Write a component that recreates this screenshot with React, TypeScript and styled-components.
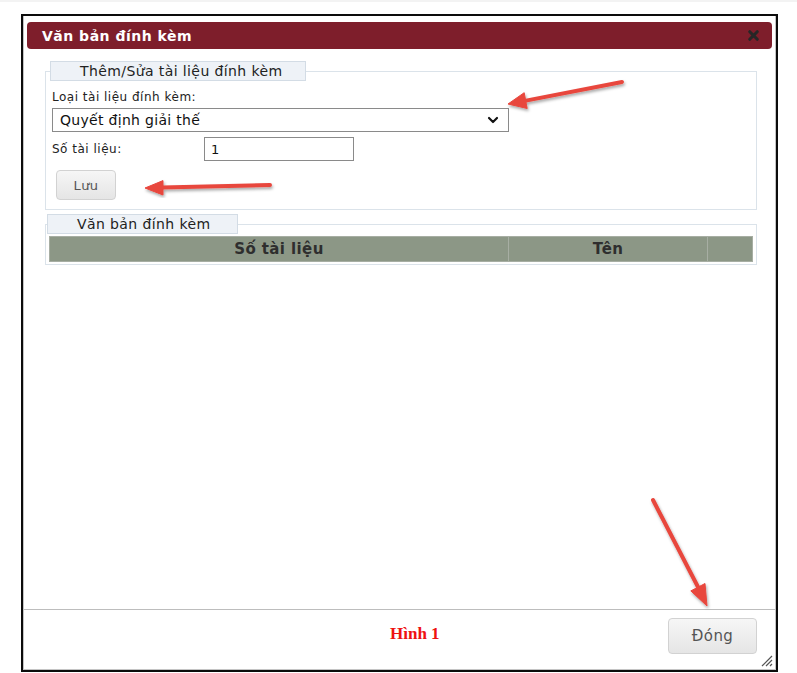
import styled, { createGlobalStyle } from 'styled-components';
import { ChevronDown, X } from 'lucide-react';

const GlobalStyle = createGlobalStyle`
  html, body {
    margin: 0;
    padding: 0;
    background: #ffffff;
  }
  body {
    font-family: "DejaVu Sans", Verdana, sans-serif;
    color: #222;
  }
`;

const Page = styled.div`
  position: relative;
  width: 797px;
  height: 673px;
  overflow: hidden;
  border-top: 2px solid #f3f3f3;
  box-sizing: border-box;
`;

const Frame = styled.div`
  margin: 12px 0 0 21px;
  width: 757px;
  height: 658px;
  box-sizing: border-box;
  border: 2px solid #0c0c0c;
  display: flex;
`;

const Dialog = styled.div`
  position: relative;
  flex: 1;
  display: flex;
  flex-direction: column;
  border: 1px solid #c4c4c4;
  border-top: none;
  padding-top: 6px;
`;

const TitleBar = styled.div`
  margin: 0 3px;
  height: 27px;
  background: #7e1e2b;
  border-radius: 4px;
  display: flex;
  align-items: center;
  justify-content: space-between;
  padding: 0 11px 0 15px;
  color: #fff;
  font-weight: bold;
  font-size: 14px;
  letter-spacing: 0.5px;
`;

const CloseBtn = styled.span`
  display: flex;
  color: #262626;
`;

const Content = styled.div`
  flex: 1;
  padding: 12px 15px 0 18px;
  margin: 0 3px;
  display: flex;
  flex-direction: column;
  gap: 4px;
`;

const Group = styled.fieldset<{ $pad: string }>`
  margin: 0;
  border: 1px solid #dbe3ea;
  padding: ${(p) => p.$pad};
  min-width: 0;
`;

const Legend = styled.legend<{ $w: number }>`
  width: ${(p) => p.$w}px;
  box-sizing: border-box;
  height: 20px;
  margin-left: -2px;
  padding: 0 0 0 29px;
  background: #eef2f7;
  border: 1px solid #d3dce5;
  font-size: 14px;
  letter-spacing: 0.4px;
  line-height: 18px;
  color: #222;
  white-space: nowrap;
`;

const Label = styled.div`
  font-size: 12px;
  letter-spacing: 0.5px;
  color: #222;
  margin: 9px 0 4px;
`;

const SelectWrap = styled.div`
  position: relative;
  width: 457px;
`;

const Select = styled.select`
  appearance: none;
  width: 100%;
  height: 24px;
  box-sizing: border-box;
  border: 1px solid #8a8a8a;
  background: #fff;
  font-family: "DejaVu Sans", Verdana, sans-serif;
  font-size: 14px;
  letter-spacing: 0.3px;
  color: #111;
  padding: 0 0 0 7px;
  border-radius: 0;
`;

const Chevron = styled.span`
  position: absolute;
  right: 8px;
  top: 4px;
  display: flex;
  pointer-events: none;
  color: #111;
`;

const FieldRow = styled.div`
  display: flex;
  align-items: center;
  margin-top: 5px;
`;

const RowLabel = styled(Label)`
  width: 152px;
  margin: 0;
`;

const TextInput = styled.input`
  width: 150px;
  height: 24px;
  box-sizing: border-box;
  border: 1px solid #8a8a8a;
  font-family: "DejaVu Sans", Verdana, sans-serif;
  font-size: 13px;
  padding: 0 6px;
  color: #111;
`;

const Button = styled.button<{ $w: number; $h: number; $fs: number }>`
  width: ${(p) => p.$w}px;
  height: ${(p) => p.$h}px;
  border: 1px solid #d2d2d2;
  border-radius: 4px;
  background: linear-gradient(#f6f6f6, #e5e5e5);
  font-family: "DejaVu Sans", Verdana, sans-serif;
  font-size: ${(p) => p.$fs}px;
  letter-spacing: 0.4px;
  color: #555;
  padding: 0;
`;

const SaveRow = styled.div`
  margin: 9px 0 0 4px;
`;

const Grid = styled.table`
  width: 100%;
  border-collapse: collapse;
  margin-top: 2px;
`;

const HeadCell = styled.th<{ $w?: number }>`
  width: ${(p) => (p.$w ? `${p.$w}px` : 'auto')};
  height: 24px;
  padding: 0;
  background: #8c9786;
  border: 1px solid #a7aea3;
  font-size: 15px;
  letter-spacing: 0.4px;
  font-weight: bold;
  color: #2e2e2e;
`;

const Footer = styled.div`
  height: 60px;
  border-top: 1px solid #bdbdbd;
  display: flex;
  align-items: flex-start;
  padding-top: 8px;
  box-sizing: border-box;
`;

const Caption = styled.div`
  margin: 6px 0 0 366px;
  font-family: "Liberation Serif", "Times New Roman", serif;
  font-weight: bold;
  font-size: 17px;
  color: #ee1111;
`;

const FooterBtn = styled.div`
  margin-left: auto;
  margin-right: 18px;
`;

const Grip = styled.svg`
  position: absolute;
  right: 2px;
  bottom: 2px;
`;

const Arrows = styled.svg`
  position: absolute;
  left: 0;
  top: 0;
  pointer-events: none;
`;

const arrows = [
  { line: '622,80 526,98.6', head: '508,102 527.2,106.5 524.2,90.7' },
  { line: '270,183 162,185.6', head: '145,186 163,178.6 163,193' },
  { line: '653,498 698,585', head: '707,604 690.8,588.9 705,581.5' },
];

const App = () => {
  return (
    <Page>
      <GlobalStyle />
      <Frame>
        <Dialog>
          <TitleBar>
            <span>Văn bản đính kèm</span>
            <CloseBtn>
              <X size={15} strokeWidth={5} />
            </CloseBtn>
          </TitleBar>
          <Content>
            <Group $pad="0 6px 9px 6px">
              <Legend $w={256}>Thêm/Sửa tài liệu đính kèm</Legend>
              <Label>Loại tài liệu đính kèm:</Label>
              <SelectWrap>
                <Select defaultValue="gt">
                  <option value="gt">Quyết định giải thế</option>
                </Select>
                <Chevron>
                  <ChevronDown size={16} strokeWidth={3.2} />
                </Chevron>
              </SelectWrap>
              <FieldRow>
                <RowLabel>Số tài liệu:</RowLabel>
                <TextInput defaultValue="1" />
              </FieldRow>
              <SaveRow>
                <Button $w={60} $h={30} $fs={13}>Lưu</Button>
              </SaveRow>
            </Group>
            <Group $pad="0 3px 2px 3px">
              <Legend $w={191}>Văn bản đính kèm</Legend>
              <Grid>
                <thead>
                  <tr>
                    <HeadCell $w={458}>Số tài liệu</HeadCell>
                    <HeadCell $w={198}>Tên</HeadCell>
                    <HeadCell />
                  </tr>
                </thead>
              </Grid>
            </Group>
          </Content>
          <Footer>
            <Caption>Hình 1</Caption>
            <FooterBtn>
              <Button $w={89} $h={36} $fs={15}>Đóng</Button>
            </FooterBtn>
          </Footer>
          <Grip width="14" height="14" viewBox="0 0 14 14">
            <path d="M13 3 L3 13 M13 7 L7 13 M13 11 L11 13" stroke="#555" strokeWidth="1.2" />
          </Grip>
        </Dialog>
      </Frame>
      <Arrows width="797" height="673" viewBox="0 0 797 673">
        <defs>
          <filter id="sh" x="-20%" y="-20%" width="140%" height="140%">
            <feDropShadow dx="1" dy="2" stdDeviation="1.5" floodColor="#000" floodOpacity="0.35" />
          </filter>
        </defs>
        {arrows.map((a, i) => (
          <g key={i} filter="url(#sh)" fill="#e8473e" stroke="#e8473e">
            <polyline points={a.line} strokeWidth={4} strokeLinecap="round" fill="none" />
            <polygon points={a.head} strokeWidth={1} strokeLinejoin="round" />
          </g>
        ))}
      </Arrows>
    </Page>
  );
};

export default App;
